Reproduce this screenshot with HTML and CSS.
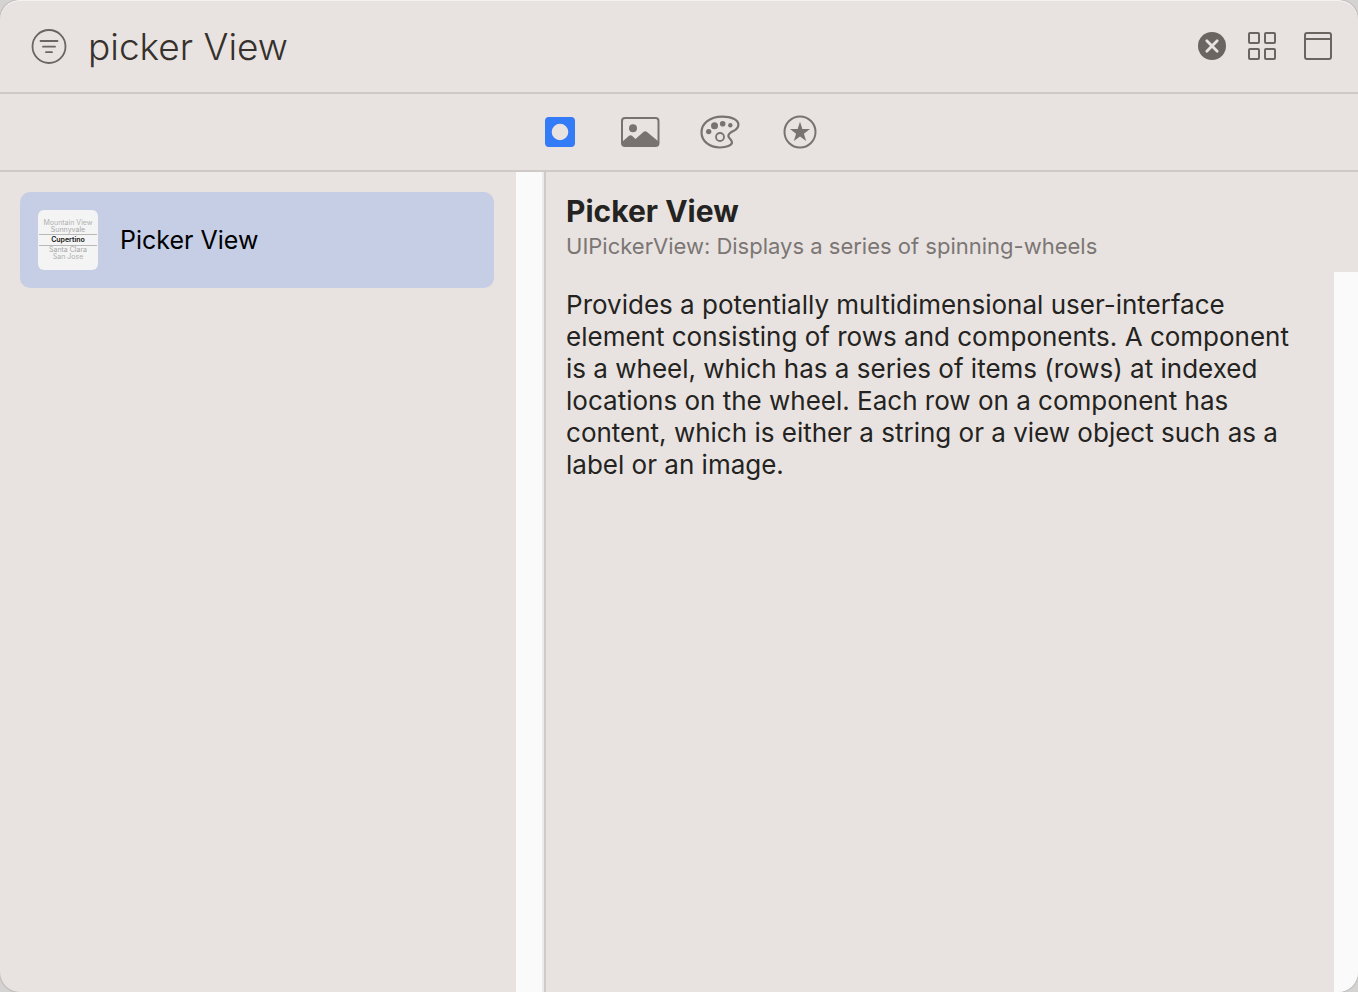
FILE: index.html
```
<!DOCTYPE html>
<html lang="en">
<head>
    <meta charset="UTF-8">
    <title>Library</title>
    <link rel="stylesheet" href="styles.css">
</head>
<body>
    <div class="window">
        <header class="search-bar">
            <svg class="filter-icon" width="36" height="36" viewBox="0 0 36 36" fill="none" stroke="currentColor" stroke-width="1.8" stroke-linecap="round">
                <circle cx="18" cy="18.5" r="16.5"/>
                <path d="M9.500 13h17M12 18.700h12M15 24.200h6"/>
            </svg>
            <input class="search-input" type="text" value="picker View" aria-label="Filter">
            <div class="search-actions">
                <button type="button" aria-label="Clear">
                    <svg width="28" height="28" viewBox="0 0 28 28">
                        <circle cx="14" cy="14" r="14" fill="currentColor"/>
                        <path d="M8.8 8.8l10.4 10.4M19.2 8.8L8.8 19.2" stroke="#e8e3e0" stroke-width="2.8" stroke-linecap="round"/>
                    </svg>
                </button>
                <button type="button" aria-label="Grid view">
                    <svg width="28" height="28" viewBox="0 0 28 28" fill="none" stroke="currentColor" stroke-width="2">
                        <rect x="1" y="1" width="10" height="10" rx="1"/>
                        <rect x="17" y="1" width="10" height="10" rx="1"/>
                        <rect x="1" y="17" width="10" height="10" rx="1"/>
                        <rect x="17" y="17" width="10" height="10" rx="1"/>
                    </svg>
                </button>
                <button type="button" aria-label="Hide details">
                    <svg width="28" height="28" viewBox="0 0 28 28" fill="none" stroke="currentColor" stroke-width="2">
                        <rect x="1" y="1" width="26" height="26" rx="2"/>
                        <path d="M1 7h26"/>
                    </svg>
                </button>
            </div>
        </header>

        <nav class="tabs">
            <button type="button" class="active" aria-label="Objects">
                <svg width="30" height="30" viewBox="0 0 30 30">
                    <path fill="currentColor" fill-rule="evenodd" d="M4 0h22a4 4 0 0 1 4 4v22a4 4 0 0 1-4 4H4a4 4 0 0 1-4-4V4a4 4 0 0 1 4-4zM15 6.7a8.3 8.3 0 1 0 0 16.6a8.3 8.3 0 1 0 0-16.6z"/>
                </svg>
            </button>
            <button type="button" aria-label="Media">
                <svg width="40" height="30" viewBox="0 0 40 30">
                    <rect x="2" y="1" width="36.5" height="28" rx="3" fill="none" stroke="currentColor" stroke-width="2"/>
                    <circle cx="13" cy="11.3" r="4" fill="currentColor"/>
                    <path d="M2 25l7-6.2q1.5-1.2 3 0l3.5 3.2 8.2-7.2q1.5-1.2 3 0L38.5 24.5V26q0 3-3 3H5q-3 0-3-3z" fill="currentColor"/>
                </svg>
            </button>
            <button type="button" aria-label="Colors">
                <svg width="40" height="34" viewBox="0 0 40 34">
                    <path fill="none" stroke="currentColor" stroke-width="2.2" d="M22 1.6C10 1.6 1.5 8.4 1.5 17.3c0 8.8 7.8 15.2 18.5 15.2 6.4 0 12-2 12-5.2 0-2.6-3.6-3.8-3.6-6.3 0-5.4 10-4 10-11.3C38.4 4.6 31.5 1.6 22 1.6z"/>
                    <circle cx="14.5" cy="10.7" r="3.5" fill="currentColor"/>
                    <circle cx="22.7" cy="8.8" r="2.8" fill="currentColor"/>
                    <circle cx="30.3" cy="10.3" r="2.2" fill="currentColor"/>
                    <circle cx="8.7" cy="16.6" r="2.7" fill="currentColor"/>
                    <circle cx="20" cy="22" r="4" fill="none" stroke="currentColor" stroke-width="1.8"/>
                </svg>
            </button>
            <button type="button" aria-label="Favorites">
                <svg width="34" height="34" viewBox="0 0 34 34">
                    <circle cx="17" cy="17" r="15.5" fill="none" stroke="currentColor" stroke-width="2"/>
                    <path fill="currentColor" d="M17 6.8l2.4 7.3h7.6l-6.1 4.6 2.3 7.3-6.2-4.5-6.2 4.500 2.300-7.300-6.100-4.600h7.600z"/>
                </svg>
            </button>
        </nav>

        <main class="content">
            <section class="list">
                <button type="button" class="item">
                    <span class="thumb">
                        <span class="far">Mountain View</span>
                        <span class="near">Sunnyvale</span>
                        <span class="picked">Cupertino</span>
                        <span class="near">Santa Clara</span>
                        <span class="far">San Jose</span>
                    </span>
                    <span>Picker View</span>
                </button>
            </section>
            <div class="scroll-track"></div>
            <section class="detail">
                <div class="detail-head">
                    <h1>Picker View</h1>
                    <p>UIPickerView: Displays a series of spinning-wheels</p>
                </div>
                <div class="detail-body">
                    <p>Provides a potentially multidimensional user-interface element consisting of rows and components. A component is a wheel, which has a series of items (rows) at indexed locations on the wheel. Each row on a component has content, which is either a string or a view object such as a label or an image.</p>
                    <div class="detail-track"></div>
                </div>
            </section>
        </main>
    </div>
</body>
</html>
```
FILE: styles.css
```
* {
    box-sizing: border-box;
}
body {
    margin: 0;
    background-color: #d5d3d2;
    font-family: Inter, sans-serif;
    color: #242321;
}
h1, p {
    margin: 0;
}
button {
    display: flex;
    align-items: center;
    justify-content: center;
    padding: 0;
    border: none;
    background: none;
    color: inherit;
    font: inherit;
}
.window {
    display: flex;
    flex-direction: column;
    height: 100vh;
    overflow: hidden;
    background-color: #e8e3e0;
    border-radius: 20px;
    box-shadow: inset 0 1px 0 #f5f3f1, 0 0 2px #8a8886;
}
.search-bar {
    display: flex;
    align-items: center;
    gap: 21px;
    height: 94px;
    padding: 0 26px 0 31px;
    border-bottom: 2px solid #d0cac7;
    color: #6b6561;
}
.search-input {
    flex: 1;
    min-width: 0;
    padding: 0;
    border: none;
    outline: none;
    background: none;
    color: #36312d;
    font-family: Inter, sans-serif;
    font-size: 37px;
    font-weight: 300;
}
.search-actions {
    display: flex;
    gap: 28px;
}
.search-actions button:first-child {
    margin-right: -6px;
}
.tabs {
    display: flex;
    justify-content: center;
    height: 78px;
    padding-left: 2px;
    border-bottom: 2px solid #d0cac7;
    color: #787370;
}
.tabs button {
    width: 80px;
}
.tabs .active {
    color: #337bf7;
}
.content {
    display: flex;
    flex: 1;
    min-height: 0;
}
.list {
    width: 38%;
    padding: 20px 22px 20px 20px;
}
.item {
    justify-content: flex-start;
    gap: 22px;
    width: 100%;
    height: 96px;
    padding: 0 18px;
    border-radius: 10px;
    background-color: #c5cee5;
    color: #000;
    font-size: 25px;
}
.thumb {
    display: flex;
    flex-direction: column;
    justify-content: center;
    width: 60px;
    height: 60px;
    border-radius: 6px;
    background-color: #f4f4f4;
    font-size: 7px;
    text-align: center;
    white-space: nowrap;
}
.far {
    color: #b0b0b0;
    line-height: 6px;
}
.near {
    color: #a8a8a8;
    line-height: 8px;
}
.picked {
    margin: 0 1px;
    border-top: 1px solid #b8b8b8;
    border-bottom: 1px solid #b8b8b8;
    color: #111;
    font-weight: 600;
    line-height: 10px;
}
.scroll-track {
    width: 30px;
    background-color: #fafafa;
    border-right: 2px solid #d0cac7;
    box-shadow: inset -2px 0 0 #ebebeb;
}
.detail {
    display: flex;
    flex: 1;
    flex-direction: column;
}
.detail-head {
    height: 100px;
    padding: 19px 20px 0;
}
.detail-head h1 {
    font-size: 30px;
    line-height: 40px;
}
.detail-head p {
    color: #7b7674;
    font-size: 22px;
    line-height: 30px;
}
.detail-body {
    display: flex;
    flex: 1;
}
.detail-body p {
    flex: 1;
    padding: 17px 40px 0 20px;
    font-size: 26px;
    line-height: 32px;
}
.detail-track {
    width: 24px;
    background-color: #fafafa;
}
```
